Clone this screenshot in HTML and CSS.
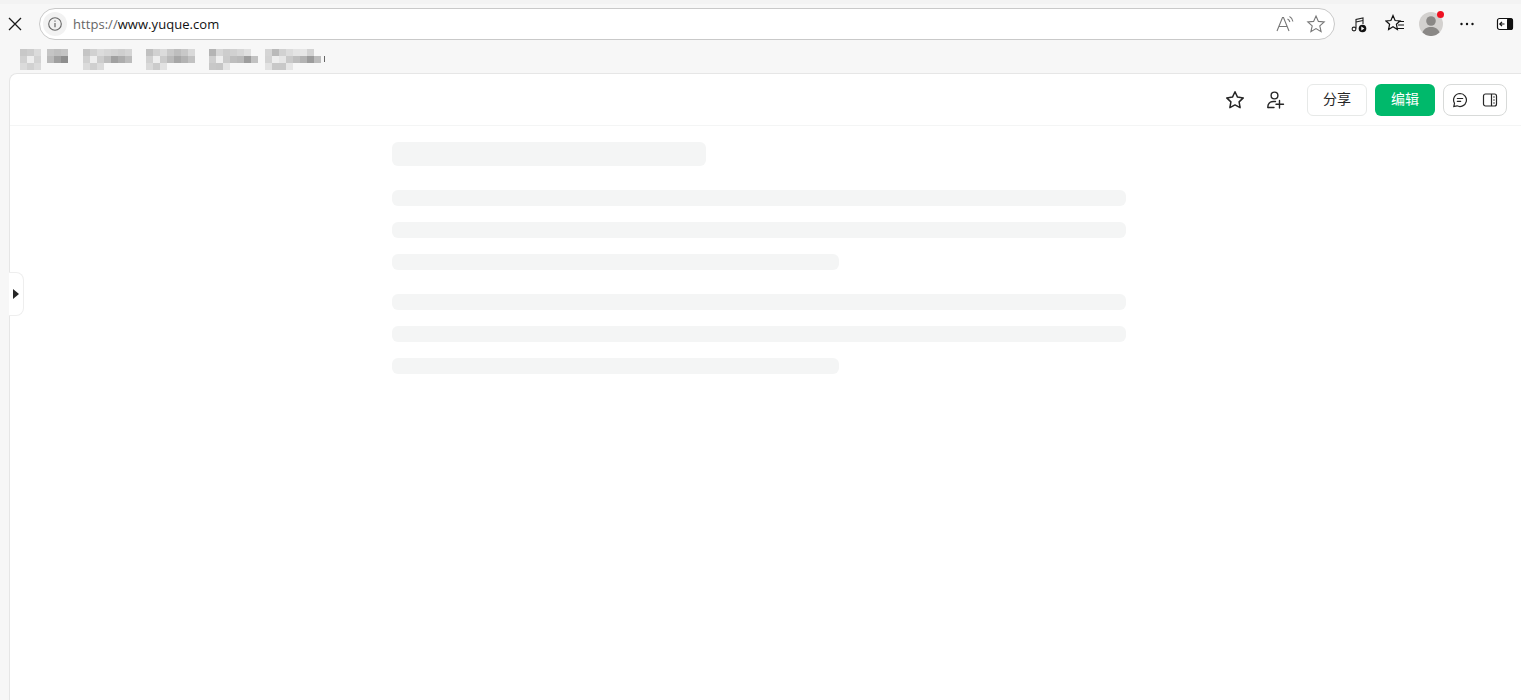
FILE: index.html
```html
<!DOCTYPE html>
<html lang="zh-CN">
<head>
  <meta charset="UTF-8">
  <title>语雀</title>
  <link rel="stylesheet" href="styles.css">
</head>
<body>
  <div class="browser-top">
    <svg class="close-icon" width="16" height="16" viewBox="0 0 16 16"><path d="M2 2l12 12M14 2L2 14" stroke="#1a1a1a" stroke-width="1.3" fill="none"/></svg>
    <div class="address-bar">
      <span class="site-info">
        <svg width="16" height="16" viewBox="0 0 16 16" fill="none" stroke="#666"><circle cx="8" cy="8" r="6.3" stroke-width="1.1"/><path d="M8 7v4.2M8 4.6v1.2" stroke-width="1.2"/></svg>
      </span>
      <span class="url"><span class="url-scheme">https://</span>www.yuque.com</span>
      <svg class="bar-icon" width="20" height="20" viewBox="0 0 20 20" fill="none" stroke="#777" stroke-width="1.1"><path d="M2 17L7.500 3.500h1L14 17M4 12.500h8.200"/><path d="M12.500 5c1.300.6 2 1.500 2.400 3M14.500 2.500c1.800.9 3 2.700 3.400 5"/></svg>
      <svg class="bar-icon" width="20" height="20" viewBox="0 0 20 20" fill="none" stroke="#777" stroke-width="1.1"><path d="M10 2l2.400 5.400 5.800.6-4.400 3.900 1.300 5.700L10 14.600l-5.100 3 1.300-5.700L1.800 8l5.800-.6z"/></svg>
    </div>
    <div class="browser-tools">
      <svg width="20" height="20" viewBox="0 0 20 20" fill="none" stroke="#222" stroke-width="1.1"><path d="M7 14.500V5.500l7-1.500v6"/><path d="M7 8l7-1.500"/><circle cx="5" cy="15" r="1.900"/><circle cx="13.500" cy="14.500" r="3.800" fill="#111" stroke="none"/><path d="M12.300 12.600l3 1.900-3 1.900z" fill="#fff" stroke="none"/></svg>
      <svg class="tool-wide" width="20" height="20" viewBox="0 0 20 20" fill="none" stroke="#111" stroke-width="1.2"><path d="M8 1.500l2.100 5 4.900.5-3.600 3.200 1 5.300L8 12.800l-4.400 2.700 1-5.300L1 7l4.900-.5z"/><path d="M13.500 7.500h5.500M13 11h6M12.500 14.500h6.500"/></svg>
      <span class="avatar">
        <svg width="24" height="24" viewBox="0 0 24 24"><circle cx="12" cy="12" r="12" fill="#d3d1cf"/><circle cx="12" cy="9" r="4.800" fill="#8a8886"/><path d="M3.500 20.500c1.500-4 4.500-5.500 8.500-5.500s7 1.500 8.500 5.500A12 12 0 0 1 3.500 20.500z" fill="#8a8886"/></svg>
        <span class="avatar-dot"></span>
      </span>
      <svg width="20" height="20" viewBox="0 0 20 20" fill="#111"><circle cx="4.500" cy="10" r="1.200"/><circle cx="10" cy="10" r="1.200"/><circle cx="15.500" cy="10" r="1.200"/></svg>
      <svg class="tool-last" width="20" height="20" viewBox="0 0 20 20"><rect x="2.500" y="4.500" width="15" height="11" rx="2" fill="#fff" stroke="#111" stroke-width="1.200"/><rect x="12" y="4.500" width="5.500" height="11" rx="1" fill="#111"/><path d="M9.500 10H4.800M7 7.800L4.800 10 7 12.200" stroke="#111" stroke-width="1.200" fill="none"/></svg>
    </div>
  </div>

  <div class="bookmarks">
    <svg class="mosaic" width="306" height="22" viewBox="0 0 306 22">
      <g class="m-group">
        <rect x="0" y="0" width="7" height="7" fill="#d2d2d2"/><rect x="7" y="0" width="7" height="7" fill="#d8d8d8"/><rect x="14" y="0" width="7" height="7" fill="#e6e6e6"/><rect x="27" y="0" width="7" height="7" fill="#cfcfcf"/><rect x="34" y="0" width="7" height="7" fill="#c9c9c9"/><rect x="41" y="0" width="7" height="7" fill="#cecece"/>
        <rect x="0" y="7" width="7" height="7" fill="#dcdcdc"/><rect x="7" y="7" width="7" height="7" fill="#fbfbfb"/><rect x="14" y="7" width="7" height="7" fill="#dedede"/><rect x="27" y="7" width="7" height="7" fill="#c4c4c4"/><rect x="34" y="7" width="7" height="7" fill="#a8a8a8"/><rect x="41" y="7" width="7" height="7" fill="#959595"/>
        <rect x="0" y="14" width="7" height="7" fill="#e6e6e6"/><rect x="7" y="14" width="7" height="7" fill="#dcdcdc"/><rect x="14" y="14" width="7" height="7" fill="#e6e6e6"/>
      </g>
      <g class="m-group">
        <rect x="63" y="0" width="7" height="7" fill="#cfcfcf"/><rect x="70" y="0" width="7" height="7" fill="#dcdcdc"/><rect x="77" y="0" width="7" height="7" fill="#e8e8e8"/><rect x="84" y="0" width="7" height="7" fill="#e2e2e2"/><rect x="91" y="0" width="7" height="7" fill="#dedede"/><rect x="98" y="0" width="7" height="7" fill="#dadada"/><rect x="105" y="0" width="7" height="7" fill="#e0e0e0"/>
        <rect x="63" y="7" width="7" height="7" fill="#dcdcdc"/><rect x="70" y="7" width="7" height="7" fill="#fbfbfb"/><rect x="77" y="7" width="7" height="7" fill="#d8d8d8"/><rect x="84" y="7" width="7" height="7" fill="#c8c8c8"/><rect x="91" y="7" width="7" height="7" fill="#a9a9a9"/><rect x="98" y="7" width="7" height="7" fill="#b6b6b6"/><rect x="105" y="7" width="7" height="7" fill="#c6c6c6"/>
        <rect x="63" y="14" width="7" height="7" fill="#e6e6e6"/><rect x="70" y="14" width="7" height="7" fill="#dadada"/><rect x="77" y="14" width="7" height="7" fill="#e6e6e6"/>
      </g>
      <g class="m-group">
        <rect x="126" y="0" width="7" height="7" fill="#cacaca"/><rect x="133" y="0" width="7" height="7" fill="#dcdcdc"/><rect x="140" y="0" width="7" height="7" fill="#e6e6e6"/><rect x="147" y="0" width="7" height="7" fill="#d4d4d4"/><rect x="154" y="0" width="7" height="7" fill="#c8c8c8"/><rect x="161" y="0" width="7" height="7" fill="#d2d2d2"/><rect x="168" y="0" width="7" height="7" fill="#e4e4e4"/>
        <rect x="126" y="7" width="7" height="7" fill="#dcdcdc"/><rect x="133" y="7" width="7" height="7" fill="#fbfbfb"/><rect x="140" y="7" width="7" height="7" fill="#d6d6d6"/><rect x="147" y="7" width="7" height="7" fill="#c4c4c4"/><rect x="154" y="7" width="7" height="7" fill="#b0b0b0"/><rect x="161" y="7" width="7" height="7" fill="#bcbcbc"/><rect x="168" y="7" width="7" height="7" fill="#cccccc"/>
        <rect x="126" y="14" width="7" height="7" fill="#e4e4e4"/><rect x="133" y="14" width="7" height="7" fill="#d6d6d6"/><rect x="140" y="14" width="7" height="7" fill="#eeeeee"/>
      </g>
      <g class="m-group">
        <rect x="189" y="0" width="7" height="7" fill="#bdbdbd"/><rect x="196" y="0" width="7" height="7" fill="#e2e2e2"/><rect x="203" y="0" width="7" height="7" fill="#d8d8d8"/><rect x="210" y="0" width="7" height="7" fill="#dcdcdc"/><rect x="217" y="0" width="7" height="7" fill="#e2e2e2"/><rect x="224" y="0" width="7" height="7" fill="#ececec"/>
        <rect x="189" y="7" width="7" height="7" fill="#dadada"/><rect x="196" y="7" width="7" height="7" fill="#fcfcfc"/><rect x="203" y="7" width="7" height="7" fill="#d6d6d6"/><rect x="210" y="7" width="7" height="7" fill="#c8c8c8"/><rect x="217" y="7" width="7" height="7" fill="#c4c4c4"/><rect x="224" y="7" width="7" height="7" fill="#a6a6a6"/><rect x="231" y="7" width="7" height="7" fill="#cccccc"/>
        <rect x="189" y="14" width="7" height="7" fill="#d2d2d2"/><rect x="196" y="14" width="7" height="7" fill="#d0d0d0"/><rect x="203" y="14" width="7" height="7" fill="#f0f0f0"/>
      </g>
      <g class="m-group">
        <rect x="245" y="0" width="7" height="7" fill="#e0e0e0"/><rect x="252" y="0" width="7" height="7" fill="#c4c4c4"/><rect x="259" y="0" width="7" height="7" fill="#dcdcdc"/><rect x="266" y="0" width="7" height="7" fill="#e8e8e8"/><rect x="273" y="0" width="7" height="7" fill="#f0f0f0"/><rect x="280" y="0" width="7" height="7" fill="#f2f2f2"/><rect x="287" y="0" width="7" height="7" fill="#dedede"/>
        <rect x="245" y="7" width="7" height="7" fill="#dedede"/><rect x="252" y="7" width="7" height="7" fill="#fafafa"/><rect x="259" y="7" width="7" height="7" fill="#f2f2f2"/><rect x="266" y="7" width="7" height="7" fill="#d4d4d4"/><rect x="273" y="7" width="7" height="7" fill="#c8c8c8"/><rect x="280" y="7" width="7" height="7" fill="#bcbcbc"/><rect x="287" y="7" width="7" height="7" fill="#a4a4a4"/><rect x="294" y="7" width="7" height="7" fill="#c6c6c6"/>
        <rect x="245" y="14" width="7" height="7" fill="#eeeeee"/><rect x="252" y="14" width="7" height="7" fill="#d2d2d2"/><rect x="259" y="14" width="7" height="7" fill="#d2d2d2"/><rect x="266" y="14" width="7" height="7" fill="#f2f2f2"/>
      </g>
      <rect x="304" y="7" width="1" height="6" fill="#666"/>
    </svg>
  </div>

  <div class="page">
    <header class="doc-header">
      <svg class="head-icon" width="20" height="20" viewBox="0 0 20 20" fill="none" stroke="#262626" stroke-width="1.500" stroke-linejoin="round"><path d="M10 1.800l2.500 5.300 5.800.8-4.200 4 1 5.800-5.100-2.800-5.100 2.800 1-5.800-4.200-4 5.800-.8z"/></svg>
      <svg class="head-icon" width="20" height="20" viewBox="0 0 20 20" fill="none" stroke="#262626" stroke-width="1.400" stroke-linecap="round"><circle cx="9.500" cy="5.500" r="3.400"/><path d="M3 17.500c-.6-3.600 1.800-6 5.500-6h2"/><path d="M3 17.500h6M14.500 10.500v7.500M11 14.200h7.500"/></svg>
      <button class="btn btn-share">分享</button>
      <button class="btn btn-edit">编辑</button>
      <div class="view-switch">
        <svg width="16" height="16" viewBox="0 0 16 16" fill="none" stroke="#262626" stroke-width="1.200" stroke-linecap="round"><path d="M8 1.500a6.500 6.500 0 1 1-3 12.300L1.800 14.500l.7-3.200A6.500 6.500 0 0 1 8 1.500z"/><path d="M5.300 6.500h5.400M5.300 9.300h3.400"/></svg>
        <svg width="16" height="16" viewBox="0 0 16 16" fill="none" stroke="#262626" stroke-width="1.200"><rect x="1.500" y="2" width="13" height="12" rx="2"/><path d="M9.500 2v12"/><path d="M11.200 5h1.600M11.200 8h1.600M11.200 11h1.600" stroke-width="1"/></svg>
      </div>
    </header>
    <div class="skeleton">
      <div class="sk-title"></div>
      <div class="sk-para">
        <div class="sk-line"></div>
        <div class="sk-line"></div>
        <div class="sk-line sk-short"></div>
      </div>
      <div class="sk-para">
        <div class="sk-line"></div>
        <div class="sk-line"></div>
        <div class="sk-line sk-short"></div>
      </div>
    </div>
    <div class="side-toggle"><span class="side-arrow"></span></div>
  </div>
</body>
</html>
```

FILE: styles.css
```css
html, body {
  margin: 0;
  height: 100%;
  overflow: hidden;
}
body {
  background: #f7f7f7;
  font-family: "Open Sans", "Noto Sans CJK SC", sans-serif;
  display: flex;
  flex-direction: column;
}
.browser-top {
  height: 40px;
  box-sizing: border-box;
  padding: 4px 6px 0 7px;
  display: flex;
  align-items: center;
  border-top: 4px solid #f3f3f3;
}
.close-icon {
  flex: none;
  margin-right: 16px;
}
.address-bar {
  flex: none;
  width: 1296px;
  height: 32px;
  box-sizing: border-box;
  background: #fff;
  border: 1px solid #c9c9c9;
  border-radius: 16px;
  display: flex;
  align-items: center;
  padding: 0 8px 0 3px;
  gap: 11px;
}
.site-info {
  width: 24px;
  height: 24px;
  border-radius: 50%;
  background: #f2f2f2;
  display: flex;
  align-items: center;
  justify-content: center;
  margin-right: -5px;
}
.url {
  flex: 1;
  font-size: 13px;
  letter-spacing: 0.05px;
  color: #111;
}
.url-scheme {
  color: #666;
}
.browser-tools {
  flex: 1;
  display: flex;
  align-items: center;
  gap: 14px;
  padding-left: 14px;
}
.tool-wide {
  margin-left: 2px;
}
.tool-last {
  margin-left: 4px;
}
.avatar {
  position: relative;
  width: 24px;
  height: 24px;
  display: block;
}
.avatar svg {
  display: block;
}
.avatar-dot {
  position: absolute;
  top: -1px;
  right: -1px;
  width: 7px;
  height: 7px;
  border-radius: 50%;
  background: #ee1122;
}
.bookmarks {
  height: 33px;
  padding: 9px 0 0 20px;
  box-sizing: border-box;
}
.mosaic {
  display: block;
}
.m-group {
  filter: blur(0.4px) brightness(0.95);
}
.page {
  position: relative;
  flex: 1;
  margin-left: 9px;
  background: #fff;
  border: 1px solid #e6e6e6;
  border-right: none;
  border-bottom: none;
  border-top-left-radius: 8px;
}
.doc-header {
  height: 52px;
  box-sizing: border-box;
  border-bottom: 1px solid #f4f5f5;
  display: flex;
  align-items: center;
  justify-content: flex-end;
  padding-right: 14px;
}
.head-icon {
  margin-right: 20px;
}
.head-icon + .btn {
  margin-left: 2px;
}
.btn {
  width: 60px;
  height: 32px;
  box-sizing: border-box;
  border-radius: 6px;
  font-family: "Noto Sans CJK SC", sans-serif;
  font-size: 14px;
  padding: 0 0 4px;
  margin-right: 8px;
}
.btn-share {
  background: #fff;
  border: 1px solid #e7e9e8;
  color: #262626;
}
.btn-edit {
  background: #00b96b;
  border: none;
  color: #fff;
}
.view-switch {
  width: 64px;
  height: 32px;
  box-sizing: border-box;
  border: 1px solid #d8dad9;
  border-radius: 8px;
  display: flex;
  align-items: center;
  justify-content: space-between;
  padding: 0 8px;
}
.skeleton {
  width: 734px;
  margin-left: 382px;
  padding-top: 16px;
}
.sk-title {
  width: 314px;
  height: 24px;
  border-radius: 6px;
  background: #f4f5f5;
  margin-bottom: 24px;
}
.sk-para {
  display: flex;
  flex-direction: column;
  gap: 16px;
  margin-bottom: 24px;
}
.sk-line {
  height: 16px;
  border-radius: 6px;
  background: #f4f5f5;
}
.sk-short {
  width: 447px;
}
.side-toggle {
  position: absolute;
  left: -1px;
  top: 198px;
  width: 15px;
  height: 44px;
  box-sizing: border-box;
  background: #fff;
  border: 1px solid #eeeeee;
  border-left: none;
  border-radius: 0 8px 8px 0;
  display: flex;
  align-items: center;
  padding-left: 4px;
}
.side-arrow {
  width: 0;
  height: 0;
  border-left: 6px solid #262626;
  border-top: 5px solid transparent;
  border-bottom: 5px solid transparent;
}
```
